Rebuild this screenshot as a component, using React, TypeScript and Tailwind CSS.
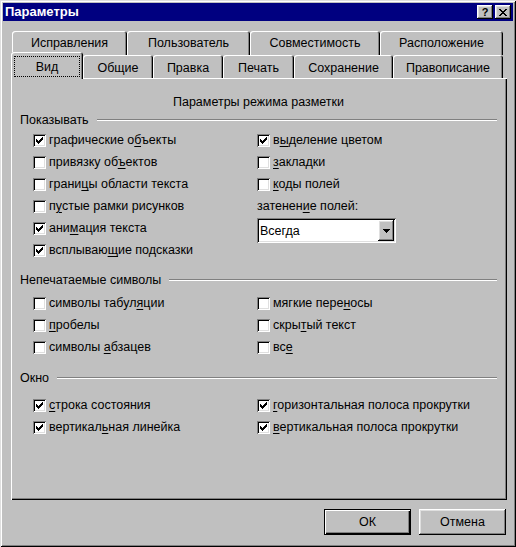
import React from 'react';

const raised = 'shadow-[inset_-1px_-1px_0_#000,inset_1px_1px_0_#fff,inset_-2px_-2px_0_#808080,inset_2px_2px_0_#dfdfdf]';
const sunken = 'shadow-[inset_1px_1px_0_#808080,inset_-1px_-1px_0_#fff,inset_2px_2px_0_#000,inset_-2px_-2px_0_#dfdfdf]';
const tabEdge = 'shadow-[inset_1px_1px_0_#fff,inset_-1px_0_0_#000,inset_-2px_0_0_#808080]';

const Check = ({ checked }: { checked?: boolean }) => (
  <span className={`flex h-[13px] w-[13px] shrink-0 items-center justify-center bg-white ${sunken}`}>
    {checked && (
      <svg width="7" height="7" viewBox="0 0 7 7" shapeRendering="crispEdges">
        <path d="M0 2h1v3H0zM1 3h1v3H1zM2 4h1v3H2zM3 3h1v3H3zM4 2h1v3H4zM5 1h1v3H5zM6 0h1v3H6z" fill="#000" />
      </svg>
    )}
  </span>
);

const Option = ({ checked, children }: { checked?: boolean; children: React.ReactNode }) => (
  <div className="flex h-[22px] items-center">
    <Check checked={checked} />
    <span className="ml-[3px] whitespace-nowrap">{children}</span>
  </div>
);

const U = ({ children }: { children: React.ReactNode }) => <span className="underline underline-offset-[2px]">{children}</span>;

const Group = ({ title, className = '' }: { title: string; className?: string }) => (
  <div className={`flex h-[16px] items-center ${className}`}>
    <span className="whitespace-nowrap">{title}</span>
    <div className="ml-[8px] h-[2px] flex-1 border-t border-b border-t-[#808080] border-b-white" />
  </div>
);

const backTabs = [
  { label: 'Исправления', w: 'w-[115px]' },
  { label: 'Пользователь', w: 'w-[123px]' },
  { label: 'Совместимость', w: 'w-[130px]' },
  { label: 'Расположение', w: 'w-[123px]' },
];

const frontTabs = [
  { label: 'Общие', w: 'w-[70px]' },
  { label: 'Правка', w: 'w-[70px]' },
  { label: 'Печать', w: 'w-[71px]' },
  { label: 'Сохранение', w: 'w-[99px]' },
  { label: 'Правописание', w: 'w-[110px]' },
];

export default function App() {
  return (
    <div className={`flex h-[547px] w-[516px] flex-col bg-[#c0c0c0] p-[3px] text-[12.5px] leading-[16px] text-black font-['Liberation_Sans',Arial,sans-serif] shadow-[inset_1px_1px_0_#dfdfdf,inset_-1px_-1px_0_#000,inset_2px_2px_0_#fff,inset_-2px_-2px_0_#808080]`}>
      {/* title bar */}
      <div className="flex h-[18px] items-center bg-[#000080] pl-[2px] pr-[2px]">
        <span className="text-[13px] font-bold text-white">Параметры</span>
        <div className="ml-auto flex gap-[2px]">
          <button className={`flex h-[14px] w-[16px] items-center justify-center bg-[#c0c0c0] text-[11px] font-bold leading-none ${raised}`}>?</button>
          <button className={`flex h-[14px] w-[16px] items-center justify-center bg-[#c0c0c0] ${raised}`}>
            <svg width="8" height="7" viewBox="0 0 8 7" shapeRendering="crispEdges">
              <path d="M0 0h2v1H0zM6 0h2v1H6zM1 1h2v1H1zM5 1h2v1H5zM2 2h4v1H2zM3 3h2v1H3zM2 4h4v1H2zM1 5h2v1H1zM5 5h2v1H5zM0 6h2v1H0zM6 6h2v1H6z" fill="#000" />
            </svg>
          </button>
        </div>
      </div>

      <div className="flex flex-1 flex-col pl-[8px] pr-[6px]">
        {/* tabs */}
        <div className="ml-[1px] mt-[10px] flex h-[24px]">
          {backTabs.map(t => (
            <div key={t.label} className={`flex h-[24px] items-center justify-center rounded-t-[3px] ${t.w} ${tabEdge}`}>{t.label}</div>
          ))}
        </div>
        <div className="flex h-[23px]">
          <div className={`relative z-10 -mt-[3px] flex h-[27px] w-[72px] rounded-t-[3px] bg-[#c0c0c0] px-[3px] pb-[2px] pt-[4px] ${tabEdge}`}>
            <div className="flex flex-1 items-center justify-center border border-dotted border-black">Вид</div>
          </div>
          {frontTabs.map(t => (
            <div key={t.label} className={`flex h-[23px] items-center justify-center rounded-t-[3px] pt-[3px] ${t.w} ${tabEdge}`}>{t.label}</div>
          ))}
        </div>

        {/* panel */}
        <div className="h-[422px] pl-[9px] pr-[10px] pt-[16px] shadow-[inset_1px_1px_0_#fff,inset_-1px_-1px_0_#000,inset_-2px_-2px_0_#808080]">
          <div className="h-[16px] text-center">Параметры режима разметки</div>

          <Group title="Показывать" className="mt-[2px]" />
          <div className="mt-[1px] grid grid-cols-[224px_1fr] pl-[13px]">
            <div>
              <Option checked>графические о<U>б</U>ъекты</Option>
              <Option>привязку об<U>ъ</U>ектов</Option>
              <Option>грани<U>ц</U>ы области текста</Option>
              <Option>п<U>у</U>стые рамки рисунков</Option>
              <Option checked>ани<U>м</U>ация текста</Option>
              <Option checked>всплываю<U>щ</U>ие подсказки</Option>
            </div>
            <div>
              <Option checked>в<U>ы</U>деление цветом</Option>
              <Option><U>з</U>акладки</Option>
              <Option><U>к</U>оды полей</Option>
              <div className="flex h-[22px] items-center">затенен<U>и</U>е полей:</div>
              <div className={`mt-[1px] flex h-[25px] w-[139px] items-stretch bg-white p-[2px] ${sunken}`}>
                <span className="flex flex-1 items-center pl-[1px]">Всегда</span>
                <span className={`flex w-[16px] items-center justify-center bg-[#c0c0c0] ${raised}`}>
                  <svg width="7" height="4" viewBox="0 0 7 4" shapeRendering="crispEdges">
                    <path d="M0 0h7v1H0zM1 1h5v1H1zM2 2h3v1H2zM3 3h1v1H3z" fill="#000" />
                  </svg>
                </span>
              </div>
            </div>
          </div>

          <Group title="Непечатаемые символы" className="mt-[11px]" />
          <div className="mt-[4px] grid grid-cols-[224px_1fr] pl-[13px]">
            <div>
              <Option>символы табул<U>я</U>ции</Option>
              <Option><U>п</U>робелы</Option>
              <Option>символы <U>а</U>бзацев</Option>
            </div>
            <div>
              <Option>мягкие пере<U>н</U>осы</Option>
              <Option>скры<U>т</U>ый текст</Option>
              <Option>вс<U>е</U></Option>
            </div>
          </div>

          <Group title="Окно" className="mt-[12px]" />
          <div className="mt-[8px] grid grid-cols-[224px_1fr] pl-[13px]">
            <div>
              <Option checked><U>с</U>трока состояния</Option>
              <Option checked>вертикал<U>ь</U>ная линейка</Option>
            </div>
            <div>
              <Option checked><U>г</U>оризонтальная полоса прокрутки</Option>
              <Option checked><U>в</U>ертикальная полоса прокрутки</Option>
            </div>
          </div>
        </div>

        {/* buttons */}
        <div className="mr-[1px] mt-[9px] flex justify-end gap-[8px]">
          <button className={`flex h-[26px] w-[87px] items-center justify-center border border-black bg-[#c0c0c0] shadow-[inset_1px_1px_0_#fff,inset_-1px_-1px_0_#000,inset_-2px_-2px_0_#808080]`}>ОК</button>
          <button className={`flex h-[26px] w-[87px] items-center justify-center bg-[#c0c0c0] ${raised}`}>Отмена</button>
        </div>
      </div>
    </div>
  );
}
